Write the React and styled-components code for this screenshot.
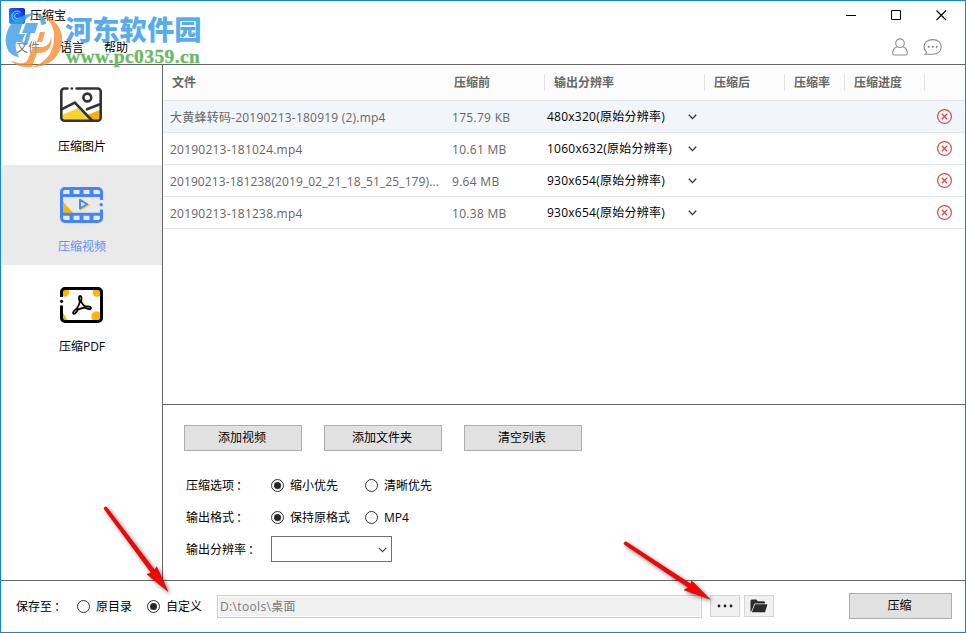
import React from 'react';
import styled, { createGlobalStyle, css } from 'styled-components';

const GlobalStyle = createGlobalStyle`
  * {
    box-sizing: border-box;
  }
  body {
    margin: 0;
    background: #fff;
    font-family: 'Open Sans', 'Noto Sans CJK SC', sans-serif;
    font-size: 12px;
    line-height: 16px;
    color: #000;
  }
  svg {
    display: block;
    flex: none;
  }
`;

const Window = styled.div`
  position: relative;
  display: flex;
  flex-direction: column;
  width: 966px;
  height: 633px;
  border: 1px solid #1883d7;
  background: #fff;
  overflow: hidden;
`;

const Header = styled.header`
  height: 64px;
  flex: none;
  border-bottom: 1px solid #666;
`;

const TitleBar = styled.div`
  display: flex;
  align-items: center;
  height: 29px;
  padding: 0 18px 0 8px;
`;

const Title = styled.span`
  margin-left: 5px;
  padding-top: 1px;
  flex: 1;
`;

const WindowButtons = styled.div`
  display: flex;
  gap: 34px;
`;

const MenuBar = styled.nav`
  display: flex;
  align-items: center;
  height: 34px;
  padding: 0 23px 0 15px;
`;

const MenuItem = styled.span`
  margin-right: 20px;
  padding-top: 1px;
  color: ${({ $faded }) => ($faded ? '#777' : '#000')};
`;

const MenuIcons = styled.div`
  display: flex;
  gap: 15px;
  margin-left: auto;
`;

const Body = styled.div`
  display: flex;
  height: 516px;
  flex: none;
  border-bottom: 1px solid #666;
`;

const Sidebar = styled.aside`
  width: 162px;
  flex: none;
  border-right: 1px solid #666;
`;

const SideItem = styled.div`
  display: flex;
  flex-direction: column;
  align-items: center;
  height: 100px;
  margin-left: 1px;
  padding: 22px 2px 0 0;
  ${({ $active }) =>
    $active &&
    css`
      background: #eaeaea;
      color: #5f8ffc;
    `}
  svg {
    height: 36px;
  }
  span {
    margin-top: 16px;
    padding-left: 2px;
  }
`;

const Main = styled.main`
  display: flex;
  flex-direction: column;
  flex: 1;
`;

const Table = styled.div`
  height: 340px;
  flex: none;
  border-bottom: 1px solid #666;
`;

const columns = '282px 100px 160px 80px 60px 80px 1fr';

const TableHead = styled.div`
  display: grid;
  grid-template-columns: ${columns};
  align-items: center;
  height: 36px;
  background: #fcfcfc;
  border-bottom: 1px solid #e4e8eb;
`;

const HeadCell = styled.div`
  height: 17px;
  padding: 1px 0 0 9px;
  border-right: 1px solid ${({ $line }) => ($line ? '#dfe5ea' : 'transparent')};
  font-weight: 600;
  color: #666;
`;

const Row = styled.div`
  display: grid;
  grid-template-columns: ${columns};
  align-items: center;
  height: 32px;
  border-bottom: 1px solid #e4e8eb;
  background: ${({ $selected }) => ($selected ? '#f2f6fa' : '#fff')};
`;

const FileCell = styled.div`
  padding: 2px 0 0 7px;
  white-space: nowrap;
  color: #666;
  letter-spacing: ${({ $tight }) => ($tight ? '0.1px' : '0.22px')};
`;

const SizeCell = styled(FileCell)`
  letter-spacing: 0.3px;
`;

const ResolutionCell = styled.div`
  display: flex;
  align-items: center;
  justify-content: space-between;
  padding: 0 8px 0 2px;
  letter-spacing: 0.25px;
  white-space: nowrap;
`;

const DeleteCell = styled.div`
  grid-column: 7;
  padding-left: 11px;
`;

const Panel = styled.section`
  flex: 1;
  padding: 20px 0 0 21px;
`;

const ButtonRow = styled.div`
  display: flex;
  gap: 22px;
  margin-bottom: 18px;
`;

const Button = styled.button`
  width: ${({ $width }) => $width}px;
  height: 26px;
  padding: 0 2px 0 0;
  border: 1px solid #adadad;
  background: #e1e1e1;
  font: inherit;
  color: #000;
`;

const OptionRow = styled.div`
  display: flex;
  align-items: center;
  height: 32px;
  padding-left: 2px;
`;

const OptionLabel = styled.span`
  width: ${({ $width }) => $width || 85}px;
  padding-top: ${({ $top = 2 }) => $top}px;
`;

const Colon = styled.span`
  margin-left: 2px;
`;

const RadioLabel = styled.label`
  display: flex;
  align-items: center;
  gap: 6px;
  width: ${({ $width }) => $width}px;
  white-space: nowrap;
`;

const RadioText = styled.span`
  padding-top: ${({ $top = 2 }) => $top}px;
`;

const RadioMark = styled.i`
  display: grid;
  place-items: center;
  width: 13px;
  height: 13px;
  flex: none;
  border: 1px solid #333;
  border-radius: 50%;
  background: #fff;
  &::after {
    content: '';
    width: 7px;
    height: 7px;
    border-radius: 50%;
    background: ${({ $on }) => ($on ? '#262626' : 'transparent')};
  }
`;

const SelectBox = styled.div`
  display: flex;
  align-items: center;
  justify-content: flex-end;
  width: 121px;
  height: 26px;
  padding: 2px 4px 0 0;
  border: 1px solid #707070;
`;

const Footer = styled.footer`
  display: flex;
  align-items: center;
  flex: 1;
  padding: 0 13px 0 15px;
`;

const PathInput = styled.div`
  width: 485px;
  height: 23px;
  padding: 3px 2px;
  border: 1px solid #ccc;
  background: #f0f0f0;
  box-shadow: inset 0 0 0 1px #fff;
  font-size: 12px;
  letter-spacing: 0.35px;
  color: #7a7a7a;
`;

const FooterButtons = styled.div`
  display: flex;
  align-items: center;
  flex: 1;
  padding-bottom: 2px;
`;

const IconButton = styled.button`
  display: grid;
  place-items: center;
  width: 30px;
  height: 22px;
  margin-left: ${({ $gap }) => $gap}px;
  padding: 0;
  border: 1px solid #d6d6d6;
  background: #f0f0f0;
`;

const Spacer = styled.div`
  flex: 1;
`;

const Watermark = styled.div`
  position: absolute;
  left: 3px;
  top: 7px;
  display: flex;
  pointer-events: none;
`;

const WatermarkText = styled.div`
  margin: 4px 0 0 1px;
  white-space: nowrap;
`;

const SiteName = styled.div`
  font-family: 'Noto Sans CJK SC', sans-serif;
  font-size: 27.3px;
  font-weight: 900;
  line-height: 33px;
  color: rgba(65, 160, 235, 0.88);
`;

const SiteUrl = styled.div`
  margin: 1px 0 0 1px;
  font-family: 'Liberation Serif', serif;
  font-size: 19.5px;
  font-weight: 700;
  line-height: 22px;
  letter-spacing: 0.42px;
  color: #68b964;
  -webkit-text-stroke: 0.3px #68b964;
`;

const Arrows = styled.svg`
  position: absolute;
  left: -1px;
  top: -1px;
  pointer-events: none;
  filter: drop-shadow(2px 2px 2px rgba(0, 0, 0, 0.55));
`;

const AppIcon = () => (
  <svg width="16" height="16" viewBox="0 0 16 16">
    <defs>
      <linearGradient id="appBlue" x1="0" y1="1" x2="1" y2="0">
        <stop offset="0" stopColor="#12a5f5" />
        <stop offset="0.5" stopColor="#1460ee" />
        <stop offset="1" stopColor="#1b1ccf" />
      </linearGradient>
    </defs>
    <rect width="16" height="16" rx="2" fill="url(#appBlue)" />
    <path d="M11.5 4.5a5 5 0 1 0 .5 6.5M10.2 6.3a2.7 2.7 0 1 0 .2 3.2" fill="none" stroke="#8ad3ff" strokeWidth="1" />
  </svg>
);

const UserIcon = () => (
  <svg width="16" height="18" viewBox="0 0 16 18" fill="none" stroke="#8c8c8c" strokeWidth="1.1">
    <circle cx="8" cy="5.2" r="4.3" />
    <path d="M4.8 8.8C2 10 .7 12.3.7 15.2c0 1.2.7 1.8 1.8 1.8h11c1.1 0 1.8-.6 1.8-1.8 0-2.9-1.3-5.2-4.1-6.4" />
  </svg>
);

const ChatIcon = () => (
  <svg width="19" height="18" viewBox="0 0 19 18">
    <path
      d="M2.5 16.2H10c4.8 0 8.2-3 8.2-7.3S14.7 1.6 9.6 1.6 1 4.7 1 8.7c0 2.2.9 4 2.4 5.2.3.7-.2 1.5-.9 2.3z"
      fill="none"
      stroke="#8c8c8c"
      strokeWidth="1.1"
    />
    <g fill="#777">
      <circle cx="5.7" cy="8.8" r="1" />
      <circle cx="9.7" cy="8.8" r="1" />
      <circle cx="13.7" cy="8.8" r="1" />
    </g>
  </svg>
);

const PictureIcon = () => (
  <svg width="42" height="36" viewBox="0 0 42 36">
    <path d="M2 28l16-7 12 12H2z" fill="#ffd42a" />
    <path d="M27 28l13-5v10h-8z" fill="#f5b000" />
    <g fill="none" stroke="#333" strokeWidth="2.6" strokeLinecap="round">
      <path d="M7.5 1.5H4.3a3 3 0 0 0-3 3v26.2a3 3 0 0 0 3 3h33.4a3 3 0 0 0 3-3V4.5a3 3 0 0 0-3-3H16.5" />
      <path d="M11.8 1.5h.1" />
      <circle cx="27.3" cy="10.5" r="3.9" />
      <path d="M1.5 22.3L14.8 15.5 32 33.5M27 22.2l13-4.9" />
    </g>
  </svg>
);

const VideoIcon = () => (
  <svg width="43" height="36" viewBox="0 0 43 36">
    <path d="M3 14.5L14 27H3z" fill="#f9b407" />
    <g fill="none" stroke="#4384ff" strokeWidth="3">
      <path d="M41.5 13V5a3.5 3.5 0 0 0-3.5-3.5H5A3.5 3.5 0 0 0 1.5 5v26A3.5 3.5 0 0 0 5 34.5h33a3.5 3.5 0 0 0 3.5-3.5v-8.5" />
      <path d="M1.5 8.5h40M1.5 27.3h40" />
      <path d="M11.5 1v8M21.5 1v8M31.5 1v8M11.5 27v8M21.5 27v8M31.5 27v8" strokeWidth="4" />
    </g>
    <circle cx="41.2" cy="17.7" r="1.7" fill="#4384ff" />
    <path d="M21 14.5l7.5 3.5-7.5 4.5z" fill="none" stroke="#ffd42a" strokeWidth="2" />
    <path d="M20 12.8l7.2 4.5L20 21.5z" fill="#eaeaea" stroke="#4384ff" strokeWidth="1.9" strokeLinejoin="round" />
  </svg>
);

const PdfIcon = () => (
  <svg width="43" height="36" viewBox="0 0 43 36">
    <g fill="#ffb400">
      <path d="M2 2h7v3.5a4.5 4.5 0 0 1-7 3.5z" />
      <circle cx="37" cy="5.5" r="4.3" />
      <circle cx="36.5" cy="29.5" r="5.2" />
      <path d="M2 24l6 10H2z" />
    </g>
    <path
      d="M1.5 10V5A3.5 3.5 0 0 1 5 1.5h33A3.5 3.5 0 0 1 41.5 5v26a3.5 3.5 0 0 1-3.5 3.5H5A3.5 3.5 0 0 1 1.5 31V18.5"
      fill="none"
      stroke="#000"
      strokeWidth="3"
    />
    <circle cx="1.6" cy="14.3" r="1.6" />
    <g fill="none" strokeLinejoin="round">
      <path d="M21 12c2 5 3 8 9 10M23 20c-4 2-7 4-9 8" stroke="#ffe3a0" strokeWidth="3" />
      <path
        d="M20.2 8.8c-1.7.2-1.6 3-.3 5.8-.6 2.5-1.6 4.8-3 7-2.6 1.6-4.5 3.7-3.7 4.9 1 1.1 3-.7 5-4.1 2.2-.9 4.5-1.5 6.8-1.8 3 1.7 6 2 6 .4 0-1.5-2.7-1.9-6-1.5-1.8-1.3-3-2.9-4-4.9.7-2.9.7-5.7-.8-5.8z"
        stroke="#000"
        strokeWidth="1.8"
      />
    </g>
  </svg>
);

const Chevron = ({ color = '#333', weight = 1.3 }) => (
  <svg width="9" height="6" viewBox="0 0 9 6">
    <path d="M.8.8l3.7 3.8L8.2.8" fill="none" stroke={color} strokeWidth={weight} />
  </svg>
);

const DeleteIcon = () => (
  <svg width="17" height="17" viewBox="0 0 17 17" fill="none" stroke="#d9474b">
    <circle cx="8.5" cy="8.5" r="6.9" strokeWidth="1.2" />
    <path d="M5.8 5.8l5.4 5.4M11.2 5.8l-5.4 5.4" strokeWidth="1.3" />
  </svg>
);

const FolderIcon = () => (
  <svg width="18" height="14" viewBox="0 0 18 14" fill="#2b2b2b">
    <path d="M.5 13V1.500L1.500.5h4.800l1.500 1.700h6.400l.8 1v1.300H4.500L1.500 12z" />
    <path d="M5 5.300h12.500L15 13.200H1.800z" />
  </svg>
);

const WatermarkLogo = () => (
  <svg width="60" height="62" viewBox="0 0 60 62">
    <g fill="#3b9de6" fillOpacity="0.8">
      <path d="M2 36C0 19 12 6 32 5c-8 3-13 8-15 15l-2 6h6l-3 8h-6c-1 5 0 10 3 15C7 48 3 43 2 36z" />
      <path d="M22 15h12l-3 10h-4l-4 12h-4l4-12h-5z" />
      <path d="M33 5c6 2 9 6 9 11l-5 1c0-4-2-8-4-12z" />
    </g>
    <g fill="#f58a2c" fillOpacity="0.78">
      <path d="M39 7c12 4 20 14 19 26-1 16-14 27-31 26 13-3 22-13 23-27 1-11-3-19-11-25z" />
      <path d="M29 39h9c6-1 9-5 9-11 2 9-2 16-10 17h-4l-5 14c-9 1-16-1-22-7 8 4 14 4 17 1z" />
      <path d="M36 24h5l-3 10h-5z" />
    </g>
  </svg>
);

const files = [
  { name: '大黄蜂转码-20190213-180919 (2).mp4', size: '175.79 KB', resolution: '480x320(原始分辨率)' },
  { name: '20190213-181024.mp4', size: '10.61 MB', resolution: '1060x632(原始分辨率)' },
  { name: '20190213-181238(2019_02_21_18_51_25_179)...', size: '9.64 MB', resolution: '930x654(原始分辨率)' },
  { name: '20190213-181238.mp4', size: '10.38 MB', resolution: '930x654(原始分辨率)' },
];

function Label({ width, top, children }) {
  return (
    <OptionLabel $width={width} $top={top}>
      {children}
      <Colon>：</Colon>
    </OptionLabel>
  );
}

function Radio({ on, width, top, children }) {
  return (
    <RadioLabel $width={width}>
      <RadioMark $on={on} />
      <RadioText $top={top}>{children}</RadioText>
    </RadioLabel>
  );
}

function FileTable() {
  return (
    <Table>
      <TableHead>
        <HeadCell>文件</HeadCell>
        <HeadCell $line>压缩前</HeadCell>
        <HeadCell $line>输出分辨率</HeadCell>
        <HeadCell $line>压缩后</HeadCell>
        <HeadCell $line>压缩率</HeadCell>
        <HeadCell $line>压缩进度</HeadCell>
      </TableHead>
      {files.map((file, i) => (
        <Row key={file.name} $selected={i === 0}>
          <FileCell $tight={file.name.length > 40}>{file.name}</FileCell>
          <SizeCell>{file.size}</SizeCell>
          <ResolutionCell>
            {file.resolution}
            <Chevron />
          </ResolutionCell>
          <DeleteCell>
            <DeleteIcon />
          </DeleteCell>
        </Row>
      ))}
    </Table>
  );
}

export default function App() {
  return (
    <>
      <GlobalStyle />
      <Window>
        <Header>
          <TitleBar>
            <AppIcon />
            <Title>压缩宝</Title>
            <WindowButtons>
              <svg width="11" height="11" stroke="#000">
                <path d="M0 5.5h10" />
              </svg>
              <svg width="11" height="11" fill="none" stroke="#000">
                <path d="M.5.5h9v9h-9z" />
              </svg>
              <svg width="11" height="11" stroke="#000" strokeWidth="1.1">
                <path d="M.5.5l9.500 9.500M10 .5L.5 10" />
              </svg>
            </WindowButtons>
          </TitleBar>
          <MenuBar>
            <MenuItem $faded>文件</MenuItem>
            <MenuItem>语言</MenuItem>
            <MenuItem>帮助</MenuItem>
            <MenuIcons>
              <UserIcon />
              <ChatIcon />
            </MenuIcons>
          </MenuBar>
        </Header>
        <Body>
          <Sidebar>
            <SideItem>
              <PictureIcon />
              <span>压缩图片</span>
            </SideItem>
            <SideItem $active>
              <VideoIcon />
              <span>压缩视频</span>
            </SideItem>
            <SideItem>
              <PdfIcon />
              <span>压缩PDF</span>
            </SideItem>
          </Sidebar>
          <Main>
            <FileTable />
            <Panel>
              <ButtonRow>
                <Button $width={118}>添加视频</Button>
                <Button $width={118}>添加文件夹</Button>
                <Button $width={118}>清空列表</Button>
              </ButtonRow>
              <OptionRow>
                <Label>压缩选项</Label>
                <Radio on width={94}>缩小优先</Radio>
                <Radio>清晰优先</Radio>
              </OptionRow>
              <OptionRow>
                <Label>输出格式</Label>
                <Radio on width={94}>保持原格式</Radio>
                <Radio>MP4</Radio>
              </OptionRow>
              <OptionRow>
                <Label>输出分辨率</Label>
                <SelectBox>
                  <Chevron color="#444" weight={1.1} />
                </SelectBox>
              </OptionRow>
            </Panel>
          </Main>
        </Body>
        <Footer>
          <Label width={61} top={0}>
            保存至
          </Label>
          <Radio width={70} top={0}>
            原目录
          </Radio>
          <Radio on width={70} top={0}>
            自定义
          </Radio>
          <PathInput>D:\tools\桌面</PathInput>
          <FooterButtons>
            <IconButton $gap={8}>
              <svg width="16" height="4" fill="#222">
                <circle cx="2" cy="2" r="1.4" />
                <circle cx="8" cy="2" r="1.4" />
                <circle cx="14" cy="2" r="1.4" />
              </svg>
            </IconButton>
            <IconButton $gap={4}>
              <FolderIcon />
            </IconButton>
            <Spacer />
            <Button $width={103}>压缩</Button>
          </FooterButtons>
        </Footer>
        <Watermark>
          <WatermarkLogo />
          <WatermarkText>
            <SiteName>河东软件园</SiteName>
            <SiteUrl>www.pc0359.cn</SiteUrl>
          </WatermarkText>
        </Watermark>
        <Arrows width="966" height="633" fill="#f00" stroke="#b40000" strokeWidth="0.5">
          <path d="M104.5 509.5a1.3 1.3 0 0 1 2.500-2L154.6 570 156.7 566.7 168 591.5 147 574.3 151.2 572.7z" />
          <path d="M624.8 544.8a1.3 1.3 0 0 1 1.700-2.700L690.8 584 691.5 580.5 710 599.3 684 590 688.3 587.5z" />
        </Arrows>
      </Window>
    </>
  );
}
